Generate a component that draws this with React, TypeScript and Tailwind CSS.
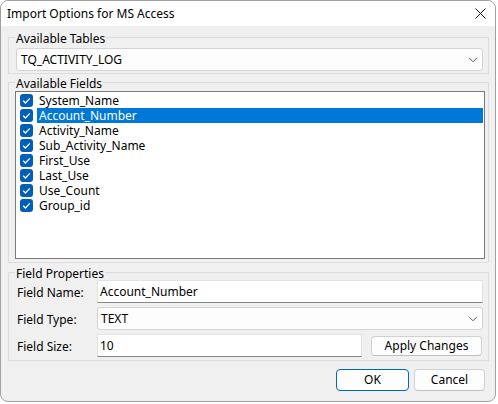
import type { ReactNode } from 'react';

const fields = [
  'System_Name',
  'Account_Number',
  'Activity_Name',
  'Sub_Activity_Name',
  'First_Use',
  'Last_Use',
  'Use_Count',
  'Group_id',
];

const font = { fontFamily: '"Noto Sans", "Open Sans", sans-serif' };

function Chevron() {
  return (
    <svg width="10" height="6" viewBox="0 0 10 6" className="shrink-0">
      <path d="M1 0.8 L5 4.8 L9 0.8" fill="none" stroke="#606060" strokeWidth="1" />
    </svg>
  );
}

function Check() {
  return (
    <span className="flex h-[13px] w-[13px] shrink-0 items-center justify-center rounded-[3px] bg-[#005fb8]">
      <svg width="13" height="13" viewBox="0 0 13 13">
        <path d="M3.2 6.8 L5.4 9 L9.8 4.4" fill="none" stroke="#ffffff" strokeWidth="1.3" />
      </svg>
    </span>
  );
}

function Group({ label, className, children }: { label: string; className?: string; children: ReactNode }) {
  return (
    <fieldset className={['w-[481px] border border-[#dcdcdc] px-0 pt-0', className].join(' ')}>
      <legend className="ml-[6px] px-[1px] pt-[4px] text-[12px] leading-[12px] text-black">{label}</legend>
      {children}
    </fieldset>
  );
}

export default function App() {
  return (
    <div className="bg-white" style={font}>
      <div className="flex h-[402px] w-[496px] flex-col overflow-hidden rounded-[8px] border border-[#a0a0a0] bg-[#f0f0f0] text-[12px] text-black">
        <div className="flex h-[25px] items-center justify-between bg-white pl-[6px] pr-[9px]">
          <span className="leading-[14px]">Import Options for MS Access</span>
          <svg width="11" height="11" viewBox="0 0 11 11">
            <path d="M0.5 0.5 L10.5 10.5 M10.5 0.5 L0.5 10.5" stroke="#1a1a1a" strokeWidth="1" />
          </svg>
        </div>

        <div className="flex flex-col pl-[7px]">
          <Group label="Available Tables" className="mt-[3px] pb-[2px]">
            <div className="ml-[7px] mt-[3px] flex h-[23px] w-[467px] items-center justify-between rounded-[3px] border border-[#d4d4d4] bg-[#fdfdfd] pl-[4px] pr-[4px]">
              <span>TQ_ACTIVITY_LOG</span>
              <Chevron />
            </div>
          </Group>

          <Group label="Available Fields" className="pb-[3px]">
            <div className="ml-[6px] mt-[1px] h-[168px] w-[470px] border border-[#7a7a7a] bg-white pl-[4px] pr-[1px] pt-[1px]">
              {fields.map((f, i) => (
                <div key={f} className="flex h-[15px] items-center">
                  <Check />
                  <span
                    className={[
                      'ml-[4px] flex h-[15px] flex-1 items-center pl-[2px] leading-[14px]',
                      i === 1 ? 'bg-[#0078d7] text-white' : '',
                    ].join(' ')}
                  >
                    {f}
                  </span>
                </div>
              ))}
            </div>
          </Group>

          <Group label="Field Properties" className="mt-[1px] pb-[3px]">
            <div className="flex flex-col gap-[4px]">
              <div className="flex h-[23px] items-center">
                <span className="ml-[8px] w-[80px] pt-[2px]">Field Name:</span>
                <div className="flex h-[23px] w-[386px] items-center border border-[#e2e2e2] border-b-[#868686] bg-white pl-[2px]">
                  Account_Number
                </div>
              </div>
              <div className="flex h-[23px] items-center">
                <span className="ml-[8px] w-[80px] pt-[2px]">Field Type:</span>
                <div className="flex h-[23px] w-[386px] items-center justify-between rounded-[3px] border border-[#d4d4d4] bg-[#fdfdfd] pl-[3px] pr-[4px]">
                  <span>TEXT</span>
                  <Chevron />
                </div>
              </div>
              <div className="flex h-[23px] items-center">
                <span className="ml-[8px] w-[80px] pt-[2px]">Field Size:</span>
                <div className="flex h-[23px] w-[265px] items-center border border-[#e2e2e2] border-b-[#868686] bg-white pl-[2px]">
                  10
                </div>
                <button
                  type="button"
                  className="ml-[9px] flex h-[20px] w-[111px] items-center justify-center rounded-[4px] border border-[#d0d0d0] border-b-[#c0c0c0] bg-[#fdfdfd]"
                >
                  Apply Changes
                </button>
              </div>
            </div>
          </Group>

          <div className="mt-[8px] flex gap-[5px] pl-[328px]">
            <button
              type="button"
              className="flex h-[22px] w-[73px] items-center justify-center rounded-[4px] border border-[#0067c0] bg-[#fdfdfd]"
            >
              OK
            </button>
            <button
              type="button"
              className="flex h-[22px] w-[71px] items-center justify-center rounded-[4px] border border-[#d0d0d0] border-b-[#c0c0c0] bg-[#fdfdfd]"
            >
              Cancel
            </button>
          </div>
        </div>
      </div>
    </div>
  );
}
